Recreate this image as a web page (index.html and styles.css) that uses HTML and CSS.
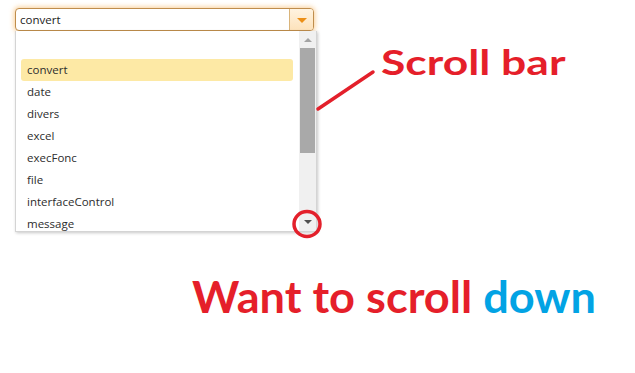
FILE: index.html
```html
<!DOCTYPE html>
<html>
<head>
<meta charset="utf-8">
<link rel="stylesheet" href="styles.css">
</head>
<body>
<div class="page">
  <div class="combo">
    <div class="combo-input">convert</div>
    <div class="combo-btn"><span class="tri-orange"></span></div>
  </div>
  <div class="popup">
    <ul class="list">
      <li class="item empty">&nbsp;</li>
      <li class="item selected">convert</li>
      <li class="item">date</li>
      <li class="item">divers</li>
      <li class="item">excel</li>
      <li class="item">execFonc</li>
      <li class="item">file</li>
      <li class="item">interfaceControl</li>
      <li class="item">message</li>
    </ul>
    <div class="scrollbar">
      <div class="arrow-up"></div>
      <div class="thumb"></div>
      <div class="track-rest"></div>
      <div class="arrow-down"></div>
    </div>
  </div>
  <svg class="marks" width="635" height="373" viewBox="0 0 635 373">
    <line x1="318" y1="109" x2="373" y2="72" stroke="#e3202b" stroke-width="3.5" stroke-linecap="round"/>
    <ellipse cx="307" cy="224" rx="13" ry="12.5" fill="none" stroke="#e3202b" stroke-width="3.5"/>
  </svg>
  <div class="label-scroll">Scroll bar</div>
  <div class="label-want">Want to scroll <span class="blue">down</span></div>
</div>
</body>
</html>
```
FILE: styles.css
```css
html, body {
  margin: 0;
  padding: 0;
  background: #ffffff;
}
.page {
  position: relative;
  width: 635px;
  height: 373px;
  overflow: hidden;
  font-family: "Open Sans", "Noto Sans", sans-serif;
}
.combo {
  position: relative;
  margin: 8px 0 0 15px;
  width: 299px;
  height: 23px;
  box-sizing: border-box;
  border: 1px solid #bf8d4c;
  border-radius: 4px;
  display: flex;
  background: #fff;
  box-shadow: 0 0 5px 1px rgba(247, 175, 80, 0.6);
}
.combo-input {
  flex: 1;
  font-size: 11.5px;
  color: #222;
  padding-left: 4px;
  line-height: 21px;
}
.combo-btn {
  width: 23px;
  border-left: 1px solid #d9b47a;
  border-radius: 0 3px 3px 0;
  background: linear-gradient(#fff3e0, #fde2bb);
  display: flex;
  align-items: center;
  justify-content: center;
}
.tri-orange {
  width: 0;
  height: 0;
  border-left: 5px solid transparent;
  border-right: 5px solid transparent;
  border-top: 5px solid #ec8f16;
  margin-top: 2px;
}
.popup {
  position: absolute;
  left: 15px;
  top: 31px;
  width: 302px;
  height: 201px;
  box-sizing: border-box;
  border: 1px solid #d4d4d4;
  border-top: none;
  background: #fff;
  display: flex;
  overflow: hidden;
  box-shadow: 1px 1px 3px rgba(0, 0, 0, 0.22);
}
.list {
  flex: 1;
  list-style: none;
  margin: 0;
  padding: 6px 6px 0 5px;
}
.item {
  height: 22px;
  line-height: 22px;
  font-size: 11.5px;
  color: #2d2d2d;
  padding-left: 6px;
  border-radius: 3px;
}
.item.selected {
  background: #fde9a5;
}
.scrollbar {
  width: 17px;
  background: #f0f0f0;
  display: flex;
  flex-direction: column;
  align-items: center;
}
.arrow-up {
  width: 0;
  height: 0;
  border-left: 4px solid transparent;
  border-right: 4px solid transparent;
  border-bottom: 4px solid #a3a3a3;
  margin-top: 7px;
  margin-bottom: 6px;
}
.thumb {
  width: 15px;
  height: 105px;
  background: #a9a9a9;
}
.track-rest {
  flex: 1;
}
.arrow-down {
  width: 0;
  height: 0;
  border-left: 4px solid transparent;
  border-right: 4px solid transparent;
  border-top: 4px solid #505050;
  margin-bottom: 7px;
}
.marks {
  position: absolute;
  left: 0;
  top: 0;
}
.label-scroll {
  position: absolute;
  left: 381px;
  top: 36px;
  font-family: "Lato", "Open Sans", sans-serif;
  font-weight: 700;
  font-size: 35px;
  color: #e51f2a;
  line-height: 50px;
  white-space: nowrap;
  transform: scaleX(1.27);
  transform-origin: left center;
}
.label-want {
  position: absolute;
  left: 192px;
  top: 267px;
  font-family: "Lato", "Open Sans", sans-serif;
  font-weight: 700;
  font-size: 43px;
  color: #e51f2a;
  line-height: 60px;
  white-space: nowrap;
  transform: scaleX(1.05);
  transform-origin: left center;
}
.blue {
  color: #02a3e4;
}
```
